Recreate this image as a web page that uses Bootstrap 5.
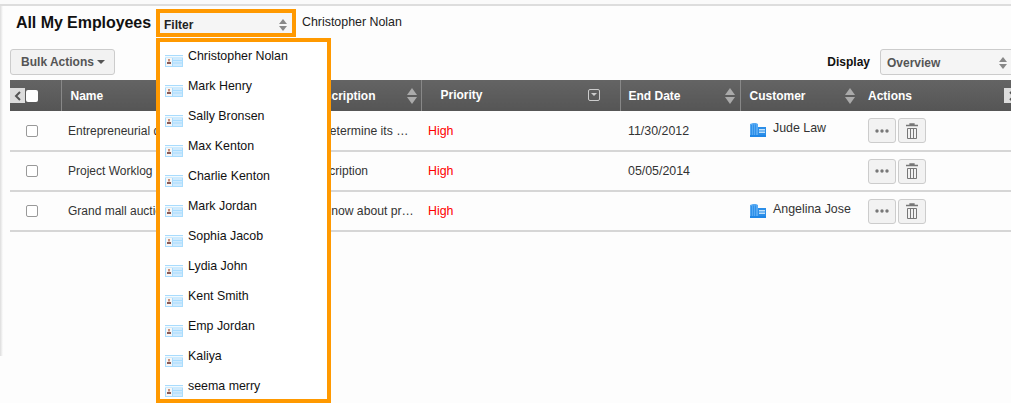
<!DOCTYPE html>
<html lang="en">
<head>
<meta charset="utf-8">
<title>All My Employees</title>
<link href="https://cdn.jsdelivr.net/npm/bootstrap@5.3.0/dist/css/bootstrap.min.css" rel="stylesheet">
<style>
html,body{height:403px;overflow:hidden;}
body{background:#fdfdfd;font-family:"Liberation Sans",Arial,sans-serif;font-size:12px;color:#333;position:relative;}
.top-strip{height:6px;background:#fafafa;border-bottom:2px solid #ddd;}
.left-shade{position:absolute;left:0;top:6px;width:3px;height:350px;background:linear-gradient(90deg,#ddd,#fdfdfd);}
.head-row{height:31px;padding-left:16px;padding-top:3px;}
.page-title{font-size:16px;font-weight:700;color:#111;line-height:20px;margin:4px 0 0;width:140px;letter-spacing:-.004em;}
.filter-box{width:140px;height:28px;border:4px solid #f90;background:#f5f5f5;padding:3px 5px 0 4px;font-weight:700;color:#222;}
.chosen{font-size:12.4px;color:#222;margin-left:6px;}
.ud{display:inline-flex;flex-direction:column;gap:2px;}
.ud i{display:block;width:0;height:0;border-left:4px solid transparent;border-right:4px solid transparent;}
.ud i:first-child{border-bottom:5px solid #888;}
.ud i:last-child{border-top:5px solid #888;}
.ud.big i{border-left-width:5px;border-right-width:5px;}
.ud.big i:first-child{border-bottom:7px solid #aaa;}
.ud.big i:last-child{border-top:7px solid #aaa;}
.tool-row{height:43px;padding:12px 0 0 10px;}
.bulk{width:105px;height:26px;padding:0 0 0 1px;font-size:12px;font-weight:700;color:#555;background:#f2f2f2;border:1px solid #ccc;border-radius:3px;}
.bulk:after{content:"";display:inline-block;margin-left:3px;vertical-align:2px;border-left:4px solid transparent;border-right:4px solid transparent;border-top:4px solid #555;}
.disp-label{font-weight:700;color:#111;margin-right:10px;margin-top:6px;line-height:14px;}
.disp-sel{width:140px;height:26px;margin-right:-9px;border:1px solid #ccc;border-radius:3px;background:#f5f5f5;color:#555;font-weight:700;padding:2px 12px 0 6px;}
.emp-table{table-layout:fixed;width:1011px;margin:0 0 0 10px;border-collapse:collapse;}
.emp-table th{height:31px;padding:0 0 0 8px;background:linear-gradient(#646464,#555);color:#fff;font-size:12px;font-weight:700;border:0;border-right:1px solid #888;vertical-align:middle;white-space:nowrap;}
.emp-table th.nb{border-right:0;padding-left:8px;}
.emp-table th.cu{border-right:0;padding-left:9px;}
.emp-table th.nm{padding-left:9px;}
.emp-table th.pr{padding-left:19px;}
.emp-table th.dsc{padding-left:0;}
.emp-table td{height:40px;padding:0 0 0 7px;font-size:12px;color:#333;background:transparent;border:0;border-bottom:2px solid #d6d6d6;vertical-align:middle;white-space:nowrap;overflow:hidden;}
.emp-table td.dt{padding-left:8px;font-size:12.4px;}
.emp-table td.d1{padding-left:10px;font-size:12.2px;}
.emp-table td.d2{padding-left:0;text-indent:-3px;overflow:visible;}
.emp-table td.d3{padding-left:12px;font-size:12.2px;}
.emp-table td.prio{color:#f00;font-size:12.4px;}
.emp-table tr.first-row td.dt,.emp-table tr.first-row td.d1,.emp-table tr.first-row td.prio{padding-top:2px;}
.hflex{display:flex;align-items:center;justify-content:space-between;padding-right:5px;}
.hflex.pf{padding-right:20px;}
.hflex.pd{padding-right:4px;}
.shift-dn{margin-left:-2px;}
.up1{margin-top:-2px;}
.chev{position:absolute;top:88px;width:15px;height:15px;background:#ddd;color:#555;display:flex;align-items:center;justify-content:center;}
.hcheck{position:absolute;left:26px;top:90px;width:12px;height:12px;background:#fff;border-radius:2px;}
.rowcheck{display:block;width:12px;height:12px;margin-left:9px;border:1px solid #999;border-radius:2px;background:#fff;}
.filter-ic{width:12px;height:12px;border:1px solid #ccc;border-radius:2px;display:flex;align-items:center;justify-content:center;}
.filter-ic:after{content:"";border-left:3px solid transparent;border-right:3px solid transparent;border-top:3px solid #ccc;}
.act{width:28px;height:25px;padding:0;background:#f2f2f2;border:1px solid #ccc;border-radius:3px;display:inline-flex;align-items:center;justify-content:center;color:#777;}
.acts{display:flex;gap:2px;padding-left:1px;}
.cust{display:flex;gap:7px;align-items:flex-start;padding-left:3px;font-size:12.4px;}
.cust span{margin-top:-4px;}
.menu-box{position:absolute;left:156px;top:38px;width:175px;height:365px;border:4px solid #f90;background:#fff;padding:3px 0 0 5px;}
.menu-item{height:30px;display:flex;gap:5px;color:#111;font-size:12.4px;line-height:14px;padding-top:4px;}
.menu-item svg{margin-top:6px;flex:none;}
</style>
</head>
<body>
<div class="top-strip"></div>
<div class="left-shade"></div>
<svg width="0" height="0" class="position-absolute">
<symbol id="card" viewBox="0 0 18 12"><rect width="18" height="12" fill="#a9dcfd"/><rect y="1" width="18" height="1.500" fill="#f2f9fe"/><rect x="1" y="3" width="6" height="8" fill="#f6f6f6"/><rect x="8" y="3" width="9" height="8" fill="#cfeafd"/><rect x="3" y="4" width="2" height="2.500" fill="#c9917a"/><rect x="2" y="7" width="4" height="2" fill="#8a5a55"/><path d="M8 5.500h9M8 8h9" stroke="#a9dcfd"/></symbol>
<symbol id="bldg" viewBox="0 0 16 14"><path d="M0 1 3 0H6L8 1V14H0Z" fill="#56a9f3"/><path d="M1.500 2v10M3.500 1.500v10.500M5.500 1.500v10.500" stroke="#2b8ee8" stroke-width=".9"/><path d="M8 4H16V14H8Z" fill="#2b8ee8"/><rect x="9" y="6" width="6" height="1.500" fill="#bfe0fa"/><rect x="9" y="8.500" width="6" height="1.500" fill="#bfe0fa"/><rect x="0" y="12" width="16" height="2" fill="#1f86e6"/></symbol>
<symbol id="dots" viewBox="0 0 14 4"><circle cx="2" cy="2" r="1.700" fill="#777"/><circle cx="7" cy="2" r="1.700" fill="#777"/><circle cx="12" cy="2" r="1.700" fill="#777"/></symbol>
<symbol id="bin" viewBox="0 0 12 16"><path d="M0 2.500h12M4 2.500V1h4v1.500" stroke="#777" stroke-width="1.300" fill="none"/><path d="M1.500 5.500h9V15.500h-9ZM4.500 5.500V15.500M7.500 5.500V15.500" stroke="#777" fill="none"/></symbol>
</svg>

<div class="head-row d-flex">
  <h1 class="page-title">All My Employees</h1>
  <div class="filter-box d-flex align-items-center justify-content-between"><span>Filter</span><span class="ud"><i></i><i></i></span></div>
  <div class="chosen mt-1">Christopher Nolan</div>
</div>

<div class="tool-row d-flex justify-content-between">
  <button type="button" class="btn bulk">Bulk Actions</button>
  <div class="d-flex">
    <div class="disp-label">Display</div>
    <div class="disp-sel d-flex align-items-center justify-content-between"><span>Overview</span><span class="ud"><i></i><i></i></span></div>
  </div>
</div>

<table class="table emp-table">
<colgroup><col style="width:51px"><col style="width:250px"><col style="width:110px"><col style="width:199px"><col style="width:120px"><col style="width:120px"><col style="width:161px"></colgroup>
<thead><tr>
<th></th>
<th class="nm">Name</th>
<th class="dsc"><div class="hflex pd"><span class="shift-dn">Description</span><span class="ud big"><i></i><i></i></span></div></th>
<th class="pr"><div class="hflex pf up1"><span>Priority</span><span class="filter-ic"></span></div></th>
<th><div class="hflex"><span>End Date</span><span class="ud big"><i></i><i></i></span></div></th>
<th class="cu"><div class="hflex"><span>Customer</span><span class="ud big"><i></i><i></i></span></div></th>
<th class="nb"><span>Actions</span></th>
</tr></thead>
<tbody>
<tr class="first-row"><td><span class="rowcheck"></span></td><td>Entrepreneurial deal</td><td class="d1">Determine its …</td><td class="prio">High</td><td class="dt">11/30/2012</td><td><div class="cust"><svg width="16" height="14"><use href="#bldg"/></svg><span>Jude Law</span></div></td><td><div class="acts"><span class="act"><svg width="14" height="4"><use href="#dots"/></svg></span><span class="act"><svg width="12" height="16"><use href="#bin"/></svg></span></div></td></tr>
<tr><td><span class="rowcheck"></span></td><td>Project Worklog</td><td class="d2">Description</td><td class="prio">High</td><td class="dt">05/05/2014</td><td></td><td><div class="acts"><span class="act"><svg width="14" height="4"><use href="#dots"/></svg></span><span class="act"><svg width="12" height="16"><use href="#bin"/></svg></span></div></td></tr>
<tr><td><span class="rowcheck"></span></td><td>Grand mall auction</td><td class="d3">Know about pr…</td><td class="prio">High</td><td class="dt"></td><td><div class="cust"><svg width="16" height="14"><use href="#bldg"/></svg><span>Angelina Jose</span></div></td><td><div class="acts"><span class="act"><svg width="14" height="4"><use href="#dots"/></svg></span><span class="act"><svg width="12" height="16"><use href="#bin"/></svg></span></div></td></tr>
</tbody>
</table>

<div class="chev" style="left:10px"><svg width="8" height="10" viewBox="0 0 8 10"><path d="M6 1 2 5l4 4" stroke="#555" stroke-width="2" fill="none"/></svg></div>
<div class="hcheck"></div>
<div class="chev" style="left:1004px"><svg width="8" height="10" viewBox="0 0 8 10"><path d="M2 1l4 4-4 4" stroke="#555" stroke-width="2" fill="none"/></svg></div>

<div class="menu-box">
  <div class="menu-item"><svg width="18" height="12"><use href="#card"/></svg><span>Christopher Nolan</span></div>
  <div class="menu-item"><svg width="18" height="12"><use href="#card"/></svg><span>Mark Henry</span></div>
  <div class="menu-item"><svg width="18" height="12"><use href="#card"/></svg><span>Sally Bronsen</span></div>
  <div class="menu-item"><svg width="18" height="12"><use href="#card"/></svg><span>Max Kenton</span></div>
  <div class="menu-item"><svg width="18" height="12"><use href="#card"/></svg><span>Charlie Kenton</span></div>
  <div class="menu-item"><svg width="18" height="12"><use href="#card"/></svg><span>Mark Jordan</span></div>
  <div class="menu-item"><svg width="18" height="12"><use href="#card"/></svg><span>Sophia Jacob</span></div>
  <div class="menu-item"><svg width="18" height="12"><use href="#card"/></svg><span>Lydia John</span></div>
  <div class="menu-item"><svg width="18" height="12"><use href="#card"/></svg><span>Kent Smith</span></div>
  <div class="menu-item"><svg width="18" height="12"><use href="#card"/></svg><span>Emp Jordan</span></div>
  <div class="menu-item"><svg width="18" height="12"><use href="#card"/></svg><span>Kaliya</span></div>
  <div class="menu-item"><svg width="18" height="12"><use href="#card"/></svg><span>seema merry</span></div>
</div>
</body>
</html>
